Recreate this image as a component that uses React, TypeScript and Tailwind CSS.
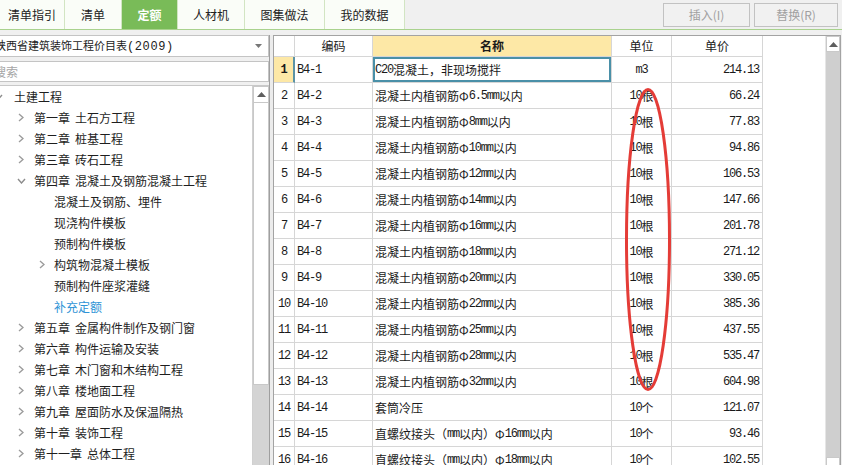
import React from "react";

const tabs = [
  { label: "清单指引", w: "w-[65px]", active: false },
  { label: "清单", w: "w-[57px]", active: false },
  { label: "定额", w: "w-[56px]", active: true },
  { label: "人材机", w: "w-[67px]", active: false },
  { label: "图集做法", w: "w-[80px]", active: false },
  { label: "我的数据", w: "w-[80px]", active: false },
];

type TreeItem = { a: string; b?: string; level: 0 | 1 | 2; chev: "none" | "right" | "down"; blue?: boolean };

const tree: TreeItem[] = [
  { a: "土建工程", level: 0, chev: "down" },
  { a: "第一章", b: "土石方工程", level: 1, chev: "right" },
  { a: "第二章", b: "桩基工程", level: 1, chev: "right" },
  { a: "第三章", b: "砖石工程", level: 1, chev: "right" },
  { a: "第四章", b: "混凝土及钢筋混凝土工程", level: 1, chev: "down" },
  { a: "混凝土及钢筋、埋件", level: 2, chev: "none" },
  { a: "现浇构件模板", level: 2, chev: "none" },
  { a: "预制构件模板", level: 2, chev: "none" },
  { a: "构筑物混凝土模板", level: 2, chev: "right" },
  { a: "预制构件座浆灌缝", level: 2, chev: "none" },
  { a: "补充定额", level: 2, chev: "none", blue: true },
  { a: "第五章", b: "金属构件制作及钢门窗", level: 1, chev: "right" },
  { a: "第六章", b: "构件运输及安装", level: 1, chev: "right" },
  { a: "第七章", b: "木门窗和木结构工程", level: 1, chev: "right" },
  { a: "第八章", b: "楼地面工程", level: 1, chev: "right" },
  { a: "第九章", b: "屋面防水及保温隔热", level: 1, chev: "right" },
  { a: "第十章", b: "装饰工程", level: 1, chev: "right" },
  { a: "第十一章", b: "总体工程", level: 1, chev: "right" },
];

const rows: [string, string, string, string][] = [
  ["B4-1", "C20混凝土，非现场搅拌", "m3", "214.13"],
  ["B4-2", "混凝土内植钢筋Φ6.5mm以内", "10根", "66.24"],
  ["B4-3", "混凝土内植钢筋Φ8mm以内", "10根", "77.83"],
  ["B4-4", "混凝土内植钢筋Φ10mm以内", "10根", "94.86"],
  ["B4-5", "混凝土内植钢筋Φ12mm以内", "10根", "106.53"],
  ["B4-6", "混凝土内植钢筋Φ14mm以内", "10根", "147.66"],
  ["B4-7", "混凝土内植钢筋Φ16mm以内", "10根", "201.78"],
  ["B4-8", "混凝土内植钢筋Φ18mm以内", "10根", "271.12"],
  ["B4-9", "混凝土内植钢筋Φ20mm以内", "10根", "330.05"],
  ["B4-10", "混凝土内植钢筋Φ22mm以内", "10根", "385.36"],
  ["B4-11", "混凝土内植钢筋Φ25mm以内", "10根", "437.55"],
  ["B4-12", "混凝土内植钢筋Φ28mm以内", "10根", "535.47"],
  ["B4-13", "混凝土内植钢筋Φ32mm以内", "10根", "604.98"],
  ["B4-14", "套筒冷压", "10个", "121.07"],
  ["B4-15", "直螺纹接头（mm以内）Φ16mm以内", "10个", "93.46"],
  ["B4-16", "直螺纹接头（mm以内）Φ18mm以内", "10个", "102.55"],
];

function Mixed({ text }: { text: string }) {
  const parts = text.split(/([\x21-\x7e]+)/).filter((p) => p.length > 0);
  return (
    <>
      {parts.map((p, i) =>
        /^[\x21-\x7e]+$/.test(p) ? (
          <span key={i} className="font-['Liberation_Mono',monospace] tracking-[-1.2px]">
            {p}
          </span>
        ) : (
          <span key={i}>{p}</span>
        )
      )}
    </>
  );
}

function ChevRight() {
  return (
    <svg width="6" height="9" viewBox="0 0 6 9">
      <polyline points="1,1 5,4.5 1,8" fill="none" stroke="#9c9c9c" strokeWidth="1.4" />
    </svg>
  );
}
function ChevDown() {
  return (
    <svg width="9" height="6" viewBox="0 0 9 6">
      <polyline points="1,1 4.5,5 8,1" fill="none" stroke="#8c8c8c" strokeWidth="1.4" />
    </svg>
  );
}

function TreeRow({ item }: { item: TreeItem }) {
  const pad = item.level === 0 ? "ml-[-7px]" : item.level === 1 ? "pl-[16px]" : "pl-[37px]";
  const textGap = item.level === 0 ? "ml-[11px]" : item.level === 2 ? "ml-[7px]" : "ml-[8px]";
  return (
    <div className={`h-[21px] flex items-center whitespace-nowrap ${pad}`}>
      <div className="w-[10px] flex items-center justify-center">
        {item.chev === "right" ? <ChevRight /> : item.chev === "down" ? <ChevDown /> : null}
      </div>
      <div className={`${textGap} text-[12px] ${item.blue ? "text-[#2f94d6]" : "text-[#1e1e1e]"} flex`}>
        <span>{item.a}</span>
        {item.b ? <span className="ml-[5px]">{item.b}</span> : null}
      </div>
    </div>
  );
}

export default function App() {
  return (
    <div className="w-[842px] h-[465px] overflow-hidden bg-[#f0f0f0] relative font-['Noto_Sans_CJK_SC',sans-serif]">
      {/* Tab bar */}
      <div className="h-[30px] flex border-b border-[#a9d28e]">
        {tabs.map((t) => (
          <div
            key={t.label}
            className={`${t.w} h-full flex items-center justify-center border-r border-[#d2e5c3] text-[12px] ${
              t.active ? "bg-[#79bb58] text-white font-bold" : "bg-[#fafdf8] text-[#222]"
            }`}
          >
            {t.label}
          </div>
        ))}
        <div className="flex-1" />
        <div className="flex items-start pt-[3px] pr-[4px] gap-[4px]">
          <div className="w-[87px] h-[24px] border border-[#c2c2c2] bg-[#f1f1f1] flex items-center justify-center text-[12px] text-[#a0a0a0]">
            插入(I)
          </div>
          <div className="w-[84px] h-[24px] border border-[#c2c2c2] bg-[#f1f1f1] flex items-center justify-center text-[12px] text-[#a0a0a0]">
            替换(R)
          </div>
        </div>
      </div>

      {/* Content */}
      <div className="flex pt-[5px]">
        {/* Left panel */}
        <div className="w-[270px] flex flex-col border-r border-[#9f9f9f] overflow-hidden">
          <div className="h-[22px] ml-[-10px] border border-[#c4c4c4] bg-white flex items-center pl-[4px] pr-[6px]">
            <span className="flex-1 text-[11px] text-[#222] whitespace-nowrap">
              陕西省建筑装饰工程价目表
              <span className="font-['Liberation_Mono',monospace] text-[12px] tracking-[0.6px]">(2009)</span>
            </span>
            <svg width="7" height="4" viewBox="0 0 7 4">
              <polygon points="0,0 7,0 3.5,4" fill="#777" />
            </svg>
          </div>
          <div className="h-[21px] mt-[4px] ml-[-10px] border border-[#c4c4c4] bg-white flex items-center pl-[3px]">
            <span className="text-[12px] text-[#a5a5a5]">搜索</span>
          </div>
          <div className="mt-[3px] flex-1 flex bg-white border-t border-[#c8c8c8]">
            <div className="flex-1 overflow-hidden">
              {tree.map((it, i) => (
                <TreeRow key={i} item={it} />
              ))}
            </div>
            <div className="w-[17px] flex flex-col border-l border-[#d0d0d0] bg-[#d4d4d4]">
              <div className="h-[17px] bg-white border border-[#c8c8c8] flex items-center justify-center">
                <svg width="9" height="5" viewBox="0 0 9 5">
                  <polygon points="0,5 9,5 4.5,0" fill="#5e5e5e" />
                </svg>
              </div>
              <div className="h-[282px] bg-white border-x border-b border-[#c8c8c8]" />
            </div>
          </div>
        </div>

        <div className="w-[3px] bg-[#ececec]" />

        {/* Table */}
        <div className="flex-1 mr-[1px] flex border-l border-t border-r border-[#a3a3a3] bg-white">
          <div className="flex-1 flex flex-col text-[12px] text-[#1a1a1a]">
            {/* header */}
            <div className="h-[21px] flex">
              <div className="w-[21px] border-r border-b border-[#d6d6d6]" />
              <div className="w-[78px] border-r border-b border-[#d6d6d6] flex items-center justify-center">编码</div>
              <div className="w-[239px] border-r border-b border-[#d6d6d6] bg-[#fde8a6] flex items-center justify-center font-bold">
                名称
              </div>
              <div className="w-[60px] border-r border-b border-[#d6d6d6] flex items-center justify-center">单位</div>
              <div className="w-[91px] border-r border-b border-[#d6d6d6] flex items-center justify-center">单价</div>
              <div className="flex-1" />
            </div>
            {rows.map((r, i) => {
              const first = i === 0;
              return (
                <div key={i} className="h-[26px] flex">
                  <div
                    className={`w-[21px] border-b flex items-center justify-center font-['Liberation_Mono',monospace] tracking-[-1.2px] ${
                      first
                        ? "bg-[#fde8a6] font-bold border-r-2 border-r-[#5b93a6] border-b-[#d6d6d6]"
                        : "border-r border-[#d6d6d6]"
                    }`}
                  >
                    {i + 1}
                  </div>
                  <div className="w-[78px] border-r border-b border-[#d6d6d6] flex items-center pl-[2px]">
                    <Mixed text={r[0]} />
                  </div>
                  <div
                    className={`w-[239px] border-r border-b border-[#d6d6d6] flex items-center pl-[2px] whitespace-nowrap overflow-hidden ${
                      first ? "shadow-[inset_0_0_0_2px_#4a90a8]" : ""
                    }`}
                  >
                    <Mixed text={r[1]} />
                  </div>
                  <div className="w-[60px] border-r border-b border-[#d6d6d6] flex items-center justify-center">
                    <Mixed text={r[2]} />
                  </div>
                  <div className="w-[91px] border-r border-b border-[#d6d6d6] flex items-center justify-end pr-[3px]">
                    <Mixed text={r[3]} />
                  </div>
                  <div className="flex-1" />
                </div>
              );
            })}
          </div>
          <div className="w-[15px] flex flex-col bg-[#cfcfcf] border-l border-[#e6e6e6]">
            <div className="h-[16px] bg-white border border-[#c9c9c9] flex items-center justify-center">
              <svg width="9" height="5" viewBox="0 0 9 5">
                <polygon points="0,5 9,5 4.5,0" fill="#5e5e5e" />
              </svg>
            </div>
            <div className="flex-1" />
            <div className="h-[16px] bg-white border border-[#c9c9c9]" />
          </div>
        </div>
      </div>

      {/* Red annotation ellipse */}
      <svg className="absolute left-0 top-0 pointer-events-none" width="842" height="465" viewBox="0 0 842 465">
        <ellipse cx="648" cy="239.5" rx="21.5" ry="150" fill="none" stroke="#e43c37" strokeWidth="3" />
      </svg>
    </div>
  );
}
